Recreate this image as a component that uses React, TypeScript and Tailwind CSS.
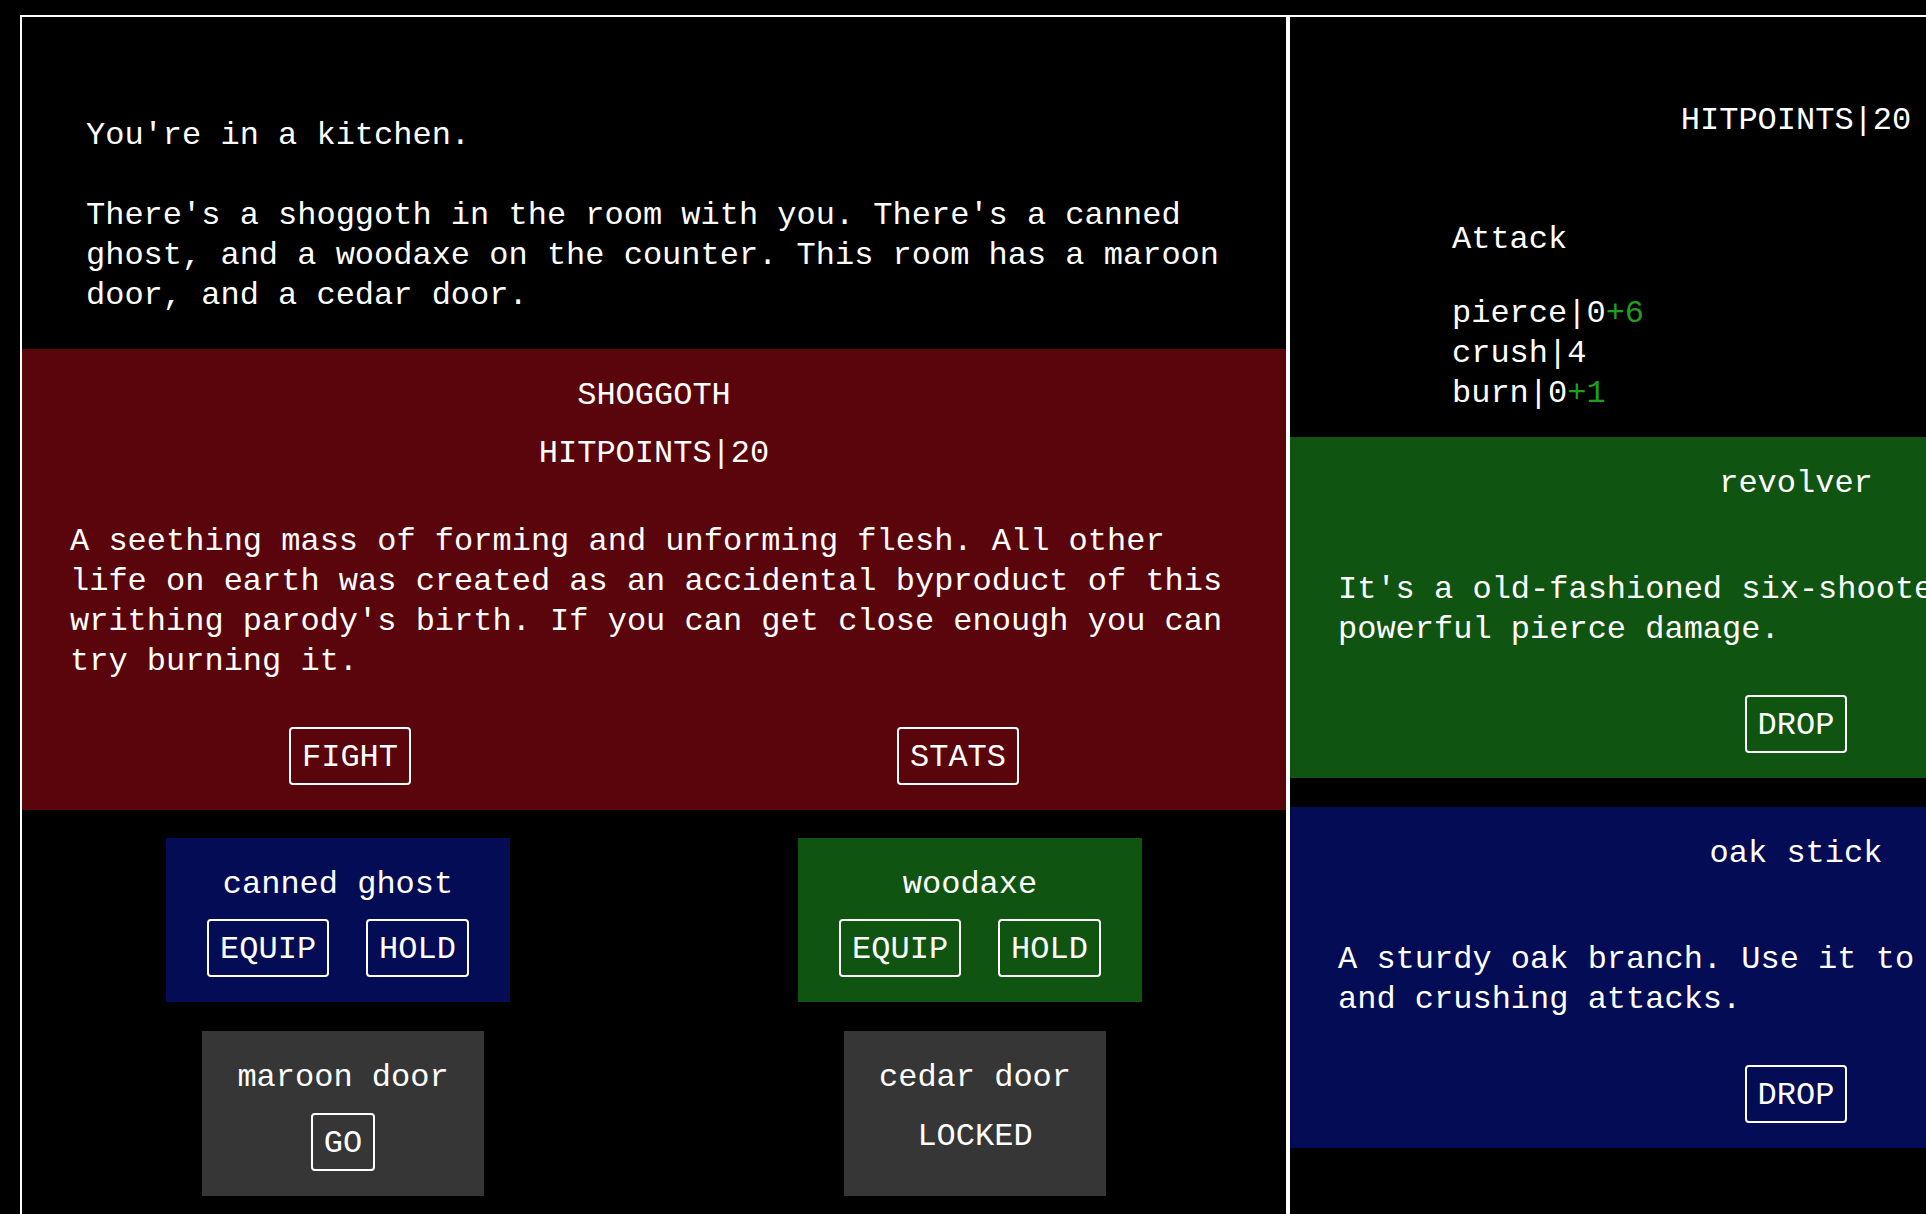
import React from "react";

type Tone = "red" | "green" | "blue";

const tones: Record<Tone, string> = {
  red: "bg-[#5a050b]",
  green: "bg-[#105412]",
  blue: "bg-[#030c55]",
};

function Btn({ label }: { label: string }) {
  return (
    <button className="rounded-[4px] border-2 border-white px-[11px] pt-[9px] pb-[5px] leading-[40px]">
      {label}
    </button>
  );
}

interface CardProps {
  tone: Tone;
  title: string;
  stat?: string;
  desc: string;
  actions: string[];
}

// big cards: monster in the room + inventory items on the right
function Card({ tone, title, stat, desc, actions }: CardProps) {
  return (
    <section className={`flex flex-col px-6 pt-[27px] pb-[25px] ${tones[tone]}`}>
      <h2 className="text-center">{title}</h2>
      <p className="mt-[18px] text-center">{stat}</p>
      <p className="mt-12 px-6">{desc}</p>
      <div className={`mt-[45px] grid ${actions.length > 1 ? "grid-cols-2" : "grid-cols-1"} justify-items-center`}>
        {actions.map((a) => (
          <Btn key={a} label={a} />
        ))}
      </div>
    </section>
  );
}

function Thing({ name, tone }: { name: string; tone: "blue" | "green" }) {
  return (
    <div className={`flex flex-col items-center px-[41px] pt-[27px] pb-[25px] ${tones[tone]}`}>
      <span>{name}</span>
      <div className="mt-[14px] flex gap-[37px]">
        <Btn label="EQUIP" />
        <Btn label="HOLD" />
      </div>
    </div>
  );
}

function Door({ name, locked }: { name: string; locked?: boolean }) {
  return (
    <div className="flex flex-col items-center bg-[#363636] px-[35px] pt-[27px] pb-[25px]">
      <span>{name}</span>
      <div className="mt-[15px]">
        {locked ? <span className="block pt-[4px]">LOCKED</span> : <Btn label="GO" />}
      </div>
    </div>
  );
}

export default function App() {
  return (
    <div className="h-screen w-screen overflow-hidden bg-black font-['Liberation_Mono',monospace] text-[32px] leading-[40px] text-white">
      <div className="ml-[20px] mt-[15px] flex w-max items-start">
        {/* room */}
        <main className="w-[1268px] border-2 border-white">
          <p className="whitespace-pre-line pl-16 pr-12 pt-[99px]">
            {"You're in a kitchen.\n\nThere's a shoggoth in the room with you. There's a canned ghost, and a woodaxe on the counter. This room has a maroon door, and a cedar door."}
          </p>

          <div className="mt-[33px]">
            <Card
              tone="red"
              title="SHOGGOTH"
              stat="HITPOINTS|20"
              desc="A seething mass of forming and unforming flesh. All other life on earth was created as an accidental byproduct of this writhing parody's birth. If you can get close enough you can try burning it."
              actions={["FIGHT", "STATS"]}
            />
          </div>

          <div className="grid grid-cols-2 justify-items-center pt-[28px]">
            <Thing name="canned ghost" tone="blue" />
            <Thing name="woodaxe" tone="green" />
          </div>

          <div className="grid grid-cols-[642px_622px] justify-items-center pt-[29px] pb-[60px]">
            <Door name="maroon door" />
            <Door name="cedar door" locked />
          </div>
        </main>

        {/* player */}
        <aside className="w-[1016px] border-x-2 border-t-2 border-white pb-[200px]">
          <p className="pt-[84px] text-center">HITPOINTS|20</p>
          <div className="pl-[162px]">
            <p className="mt-[79px]">Attack</p>
            <ul className="mt-[34px]">
              <li>
                pierce|0<span className="text-[#1f9e1f]">+6</span>
              </li>
              <li>crush|4</li>
              <li>
                burn|0<span className="text-[#1f9e1f]">+1</span>
              </li>
            </ul>
          </div>

          <div className="mt-[23px] flex flex-col gap-[29px]">
            <Card
              tone="green"
              title="revolver"
              desc="It's a old-fashioned six-shooter. It deals powerful pierce damage."
              actions={["DROP"]}
            />
            <Card
              tone="blue"
              title="oak stick"
              desc="A sturdy oak branch. Use it to deliver blunt and crushing attacks."
              actions={["DROP"]}
            />
          </div>
        </aside>
      </div>
    </div>
  );
}
